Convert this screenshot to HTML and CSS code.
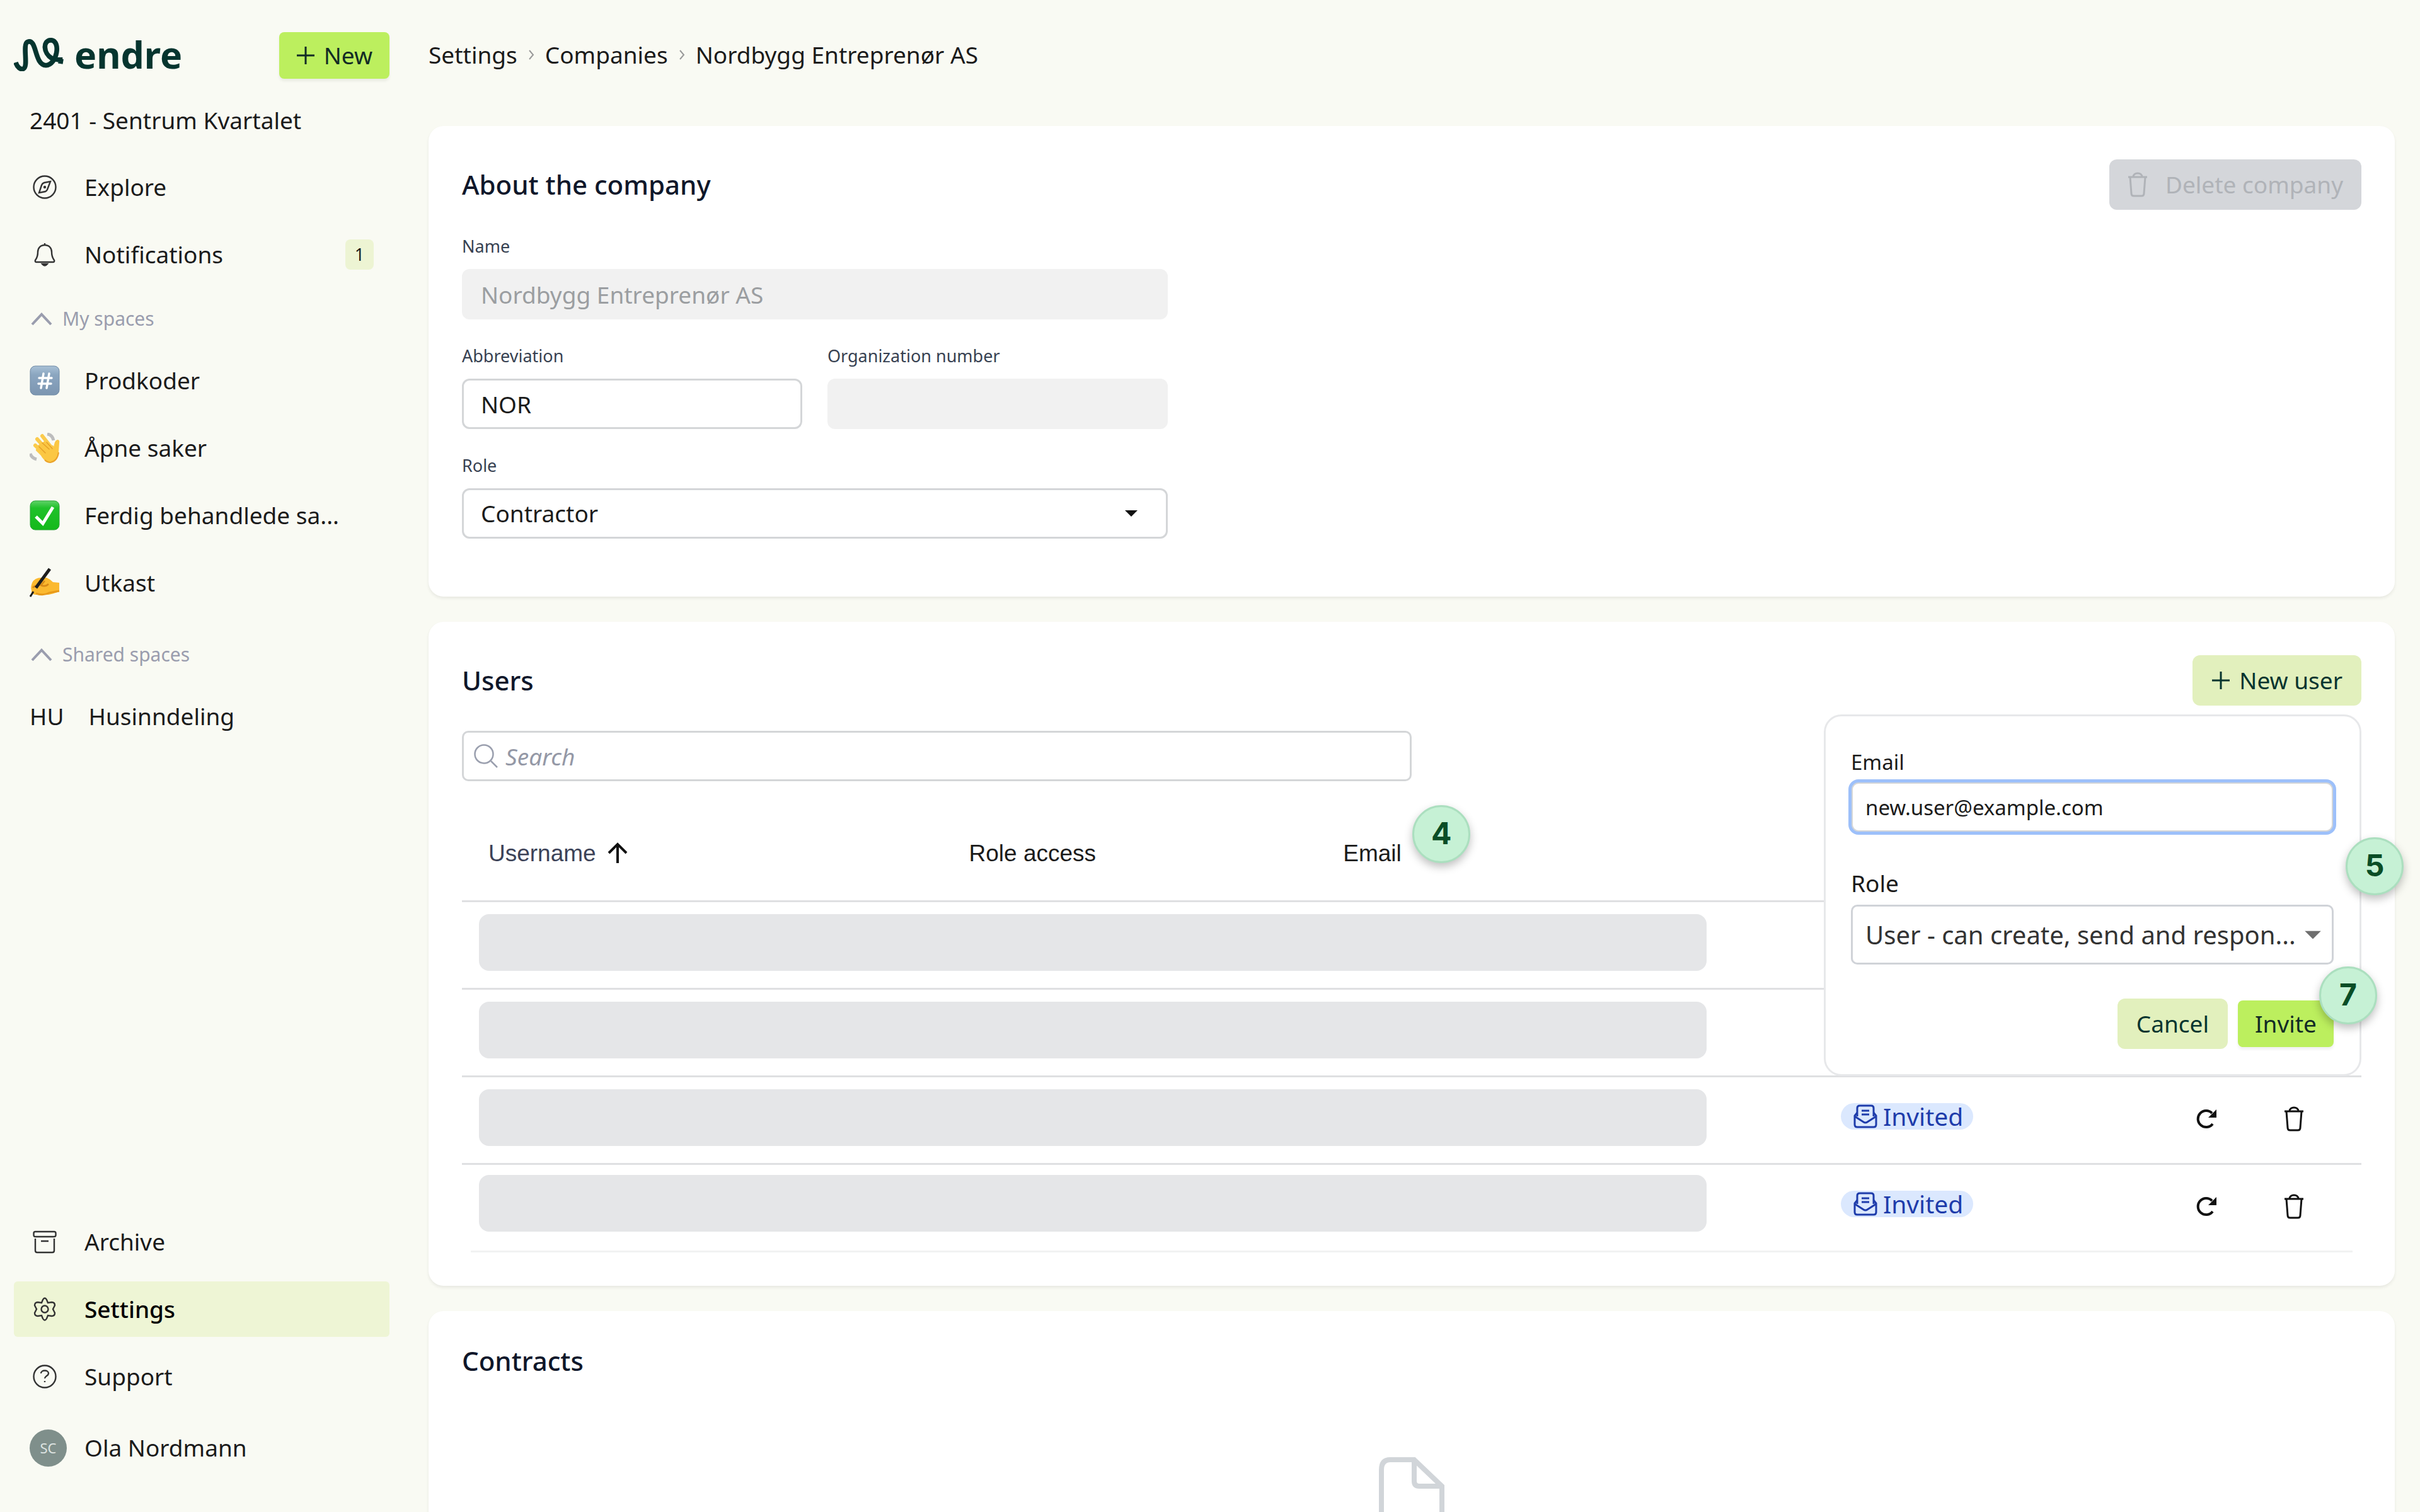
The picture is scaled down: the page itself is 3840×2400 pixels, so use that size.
FILE: index.html
```html
<!DOCTYPE html>
<html lang="en">
  <head>
    <meta charset="utf-8" />
    <meta name="viewport" content="width=device-width,initial-scale=1.0" />
    <title>Nordbygg Entreprenør AS - endre</title>
    <link rel="stylesheet" href="styles.css">
  </head>
  <body>
    <!-- shared icons -->
    <svg class="sprite" aria-hidden="true">
      <symbol id="icon-plus" viewBox="0 0 30 30">
        <path d="M15 1V29M1 15H29" />
      </symbol>
      <symbol id="icon-chevron-up" viewBox="0 0 34 22">
        <path d="M2 20L17 4L32 20" />
      </symbol>
      <symbol id="icon-trash" viewBox="0 0 32 40">
        <path d="M1 8H31M9 8C9 0 23 0 23 8M4 8L6 34Q6 38 10 38H22Q26 38 26 34L28 8" />
      </symbol>
      <symbol id="icon-refresh" viewBox="0 0 34 34">
        <path d="M27 25A13 13 0 1 1 26 8" />
        <path class="solid" d="M33 2V15H20Z" />
      </symbol>
      <symbol id="icon-invited" viewBox="0 0 38 38">
        <path d="M6 13L2 18V32Q2 36 6 36H32Q36 36 36 32V18L32 13" />
        <path d="M6 19V6Q6 2 10 2H28Q32 2 32 6V19" />
        <path d="M2 19L16 28Q19 30 22 28L36 19M13 10H25M13 16H25" />
      </symbol>
    </svg>

    <div class="app">
      <aside class="sidebar">
        <div class="sidebar-top">
          <a class="logo" href="#">
            <svg class="logo-mark" viewBox="35 33 240 160" aria-hidden="true">
              <path d="M43 151C51 176 66 186 79 182C106 172 74 66 99 53C146 32 130 163 188 165C240 163 262 48 212 44C170 46 177 108 214 130C231 138 247 139 268 138M261 134L257 157" />
            </svg>
            <span>endre</span>
          </a>
          <button class="btn btn-primary" type="button">
            <svg class="plus"><use href="#icon-plus" /></svg>
            New
          </button>
        </div>

        <div class="project">2401 - Sentrum Kvartalet</div>

        <nav class="nav">
          <a class="nav-item" href="#">
            <span class="nav-icon">
              <svg class="line-icon" viewBox="0 0 38 38">
                <circle cx="19" cy="19" r="17.5" />
                <path d="M28 10L23 23Q22 25 20 26L10 28L14 16Q15 13 18 12Z" />
                <circle cx="19" cy="19" r="1" />
              </svg>
            </span>
            Explore
          </a>
          <a class="nav-item" href="#">
            <span class="nav-icon">
              <svg class="line-icon" viewBox="0 0 38 38">
                <path d="M19 1V4M19 4C12 4 8 9 8 15C8 23 6 25 4 28Q3 31 6 31H32Q35 31 34 28C32 25 30 23 30 15C30 9 26 4 19 4Z" />
                <path d="M15 34Q19 39 23 34Z" />
              </svg>
            </span>
            Notifications
            <span class="count">1</span>
          </a>

          <button class="nav-heading" type="button">
            <svg class="chevron"><use href="#icon-chevron-up" /></svg>
            My spaces
          </button>
          <a class="nav-item" href="#">
            <span class="nav-icon">
              <svg class="emoji" viewBox="0 0 48 48">
                <defs>
                  <linearGradient id="hash-bg" x1="0" y1="0" x2="0" y2="1">
                    <stop offset="0" stop-color="#a9c1d6" />
                    <stop offset="0.3" stop-color="#8ba6c0" />
                    <stop offset="1" stop-color="#7c95b0" />
                  </linearGradient>
                </defs>
                <rect x="1" y="1" width="46" height="46" rx="8" fill="url(#hash-bg)" stroke="#6f8aa5" />
                <path d="M22 13L18 36M31 13L27 36M15 20H35M14 29H34" fill="none" stroke="#fff" stroke-width="3.5" stroke-linecap="round" />
              </svg>
            </span>
            Prodkoder
          </a>
          <a class="nav-item" href="#">
            <span class="nav-icon">
              <svg class="emoji" viewBox="0 0 48 48">
                <path d="M28 2Q36 3 38 12M1 33Q3 40 11 42" fill="none" stroke="#bdbdbd" stroke-width="5" />
                <path d="M13 27L25 39M9 20L24 34M12 10L29 29M20 5L35 24M26 38L36 23" fill="none" stroke="#fbcb4c" stroke-width="6" stroke-linecap="round" />
                <path d="M13 20L24 13L38 25Q39 12 44 11Q48 11 47 16L46 31Q44 45 33 47Q26 48 19 38Z" fill="#fbc743" />
                <path d="M15 22L25 32M20 16L31 26M27 15L36 25" fill="none" stroke="#e5a129" stroke-width="1.5" stroke-linecap="round" />
                <path d="M46 31Q44 45 33 47Q28 47 24 43" fill="none" stroke="#eba32a" stroke-width="2" />
              </svg>
            </span>
            Åpne saker
          </a>
          <a class="nav-item" href="#">
            <span class="nav-icon">
              <svg class="emoji" viewBox="0 0 48 48">
                <defs>
                  <linearGradient id="check-bg" x1="0" y1="0" x2="0" y2="1">
                    <stop offset="0" stop-color="#5fd268" />
                    <stop offset="0.25" stop-color="#1fc12a" />
                    <stop offset="1" stop-color="#14b91b" />
                  </linearGradient>
                </defs>
                <rect x="1" y="1" width="46" height="46" rx="8" fill="url(#check-bg)" stroke="#2aa437" />
                <path d="M10 26L21 37L37 11" fill="none" stroke="#fff" stroke-width="5" />
              </svg>
            </span>
            Ferdig behandlede sa...
          </a>
          <a class="nav-item" href="#">
            <span class="nav-icon">
              <svg class="emoji" viewBox="0 0 48 48">
                <path d="M4 24Q8 16 18 16H27Q32 18 37 23L47 24V38Q36 42 30 43H10Q2 43 3 36Q1 32 4 24Z" fill="#fbb92f" />
                <path d="M5 32Q9 27 14 30M24 21L18 28Q25 31 30 26" fill="none" stroke="#d98a17" stroke-width="2.5" />
                <path d="M10 41Q22 45 31 40L47 37" fill="none" stroke="#e89a1b" stroke-width="3" />
                <path d="M32 2L10 32" stroke="#1d1d1d" stroke-width="5" />
                <path d="M6 38L1 46" stroke="#1d1d1d" stroke-width="3" />
              </svg>
            </span>
            Utkast
          </a>

          <button class="nav-heading nav-heading-shared" type="button">
            <svg class="chevron"><use href="#icon-chevron-up" /></svg>
            Shared spaces
          </button>
          <a class="nav-item" href="#">
            <span class="nav-icon">HU</span>
            Husinndeling
          </a>
        </nav>

        <nav class="nav nav-bottom">
          <a class="nav-item" href="#">
            <span class="nav-icon">
              <svg class="line-icon" viewBox="0 0 38 38">
                <rect x="1.5" y="3" width="35" height="8" rx="2.5" />
                <path d="M4 14V33Q4 36 7 36H31Q34 36 34 33V14M13 18H25" />
              </svg>
            </span>
            Archive
          </a>
          <a class="nav-item active" href="#">
            <span class="nav-icon">
              <svg class="line-icon" viewBox="0 0 38 38">
                <path d="M16 4Q19 -1 22 4L24 9L30 8Q35 8 35 13L32 19L35 25Q35 30 30 30L24 29L22 34Q19 39 16 34L14 29L8 30Q3 30 3 25L6 19L3 13Q3 8 8 8L14 9Z" />
                <circle cx="19" cy="19" r="5.5" />
              </svg>
            </span>
            Settings
          </a>
          <a class="nav-item" href="#">
            <span class="nav-icon">
              <svg class="line-icon" viewBox="0 0 38 38">
                <circle cx="19" cy="19" r="17.5" />
                <path d="M13 14C13 8 25 8 25 14C25 18 19 18 19 22M19 26V28" />
              </svg>
            </span>
            Support
          </a>
          <a class="nav-item user" href="#">
            <span class="avatar">SC</span>
            Ola Nordmann
          </a>
        </nav>
      </aside>

      <main class="main">
        <nav class="breadcrumb" aria-label="Breadcrumb">
          <a href="#">Settings</a>
          <svg viewBox="0 0 10 18"><path d="M2 2L8 9L2 16" /></svg>
          <a href="#">Companies</a>
          <svg viewBox="0 0 10 18"><path d="M2 2L8 9L2 16" /></svg>
          <span>Nordbygg Entreprenør AS</span>
        </nav>

        <section class="card card-company">
          <div class="card-header">
            <h2>About the company</h2>
            <button class="btn btn-delete" type="button" disabled>
              <svg class="trash"><use href="#icon-trash" /></svg>
              Delete company
            </button>
          </div>
          <form class="company-form">
            <div class="field wide">
              <label for="name">Name</label>
              <input id="name" type="text" value="Nordbygg Entreprenør AS" disabled>
            </div>
            <div class="field">
              <label for="abbreviation">Abbreviation</label>
              <input id="abbreviation" type="text" value="NOR">
            </div>
            <div class="field">
              <label for="orgnr">Organization number</label>
              <input id="orgnr" type="text" disabled>
            </div>
            <div class="field wide">
              <label for="role">Role</label>
              <div class="select">
                <select id="role">
                  <option>Contractor</option>
                </select>
                <svg class="caret" viewBox="0 0 20 10"><path d="M0 0H20L10 10Z" /></svg>
              </div>
            </div>
          </form>
        </section>

        <section class="card">
          <div class="card-header">
            <h2>Users</h2>
            <div class="new-user">
              <button class="btn btn-secondary" type="button">
                <svg class="plus"><use href="#icon-plus" /></svg>
                New user
              </button>
              <form class="popover">
                <label class="email-label" for="invite-email">Email</label>
                <input id="invite-email" type="email" value="new.user@example.com">
                <label class="role-label" for="invite-role">Role</label>
                <div class="select">
                  <select id="invite-role">
                    <option>User - can create, send and respon...</option>
                  </select>
                  <svg class="caret" viewBox="0 0 26 13"><path d="M0 0H26L13 13Z" /></svg>
                </div>
                <div class="popover-actions">
                  <button class="btn btn-secondary" type="button">Cancel</button>
                  <button class="btn btn-primary" type="button">Invite</button>
                </div>
                <span class="step step-5">5</span>
                <span class="step step-7">7</span>
              </form>
            </div>
          </div>

          <div class="search">
            <svg viewBox="0 0 38 38" aria-hidden="true"><circle cx="16" cy="16" r="14.5" /><path d="M27 27L37 37" /></svg>
            <input type="search" placeholder="Search" aria-label="Search">
          </div>

          <table class="users">
            <colgroup>
              <col class="col-username">
              <col class="col-role">
              <col class="col-email">
              <col class="col-status">
              <col class="col-actions">
            </colgroup>
            <thead>
              <tr>
                <th class="sorted">
                  Username
                  <svg viewBox="0 0 34 34"><path d="M17 33V3M3 17L17 3L31 17" /></svg>
                </th>
                <th>Role access</th>
                <th>Email<span class="step step-4">4</span></th>
                <th></th>
                <th></th>
              </tr>
            </thead>
            <tbody>
              <tr>
                <td class="masked" colspan="3"><div class="mask"></div></td>
                <td></td>
                <td></td>
              </tr>
              <tr>
                <td class="masked" colspan="3"><div class="mask"></div></td>
                <td></td>
                <td></td>
              </tr>
              <tr>
                <td class="masked" colspan="3"><div class="mask"></div></td>
                <td class="status">
                  <span class="pill"><svg><use href="#icon-invited" /></svg>Invited</span>
                </td>
                <td>
                  <div class="actions">
                    <button type="button" aria-label="Resend"><svg class="refresh"><use href="#icon-refresh" /></svg></button>
                    <button type="button" aria-label="Delete"><svg class="trash"><use href="#icon-trash" /></svg></button>
                  </div>
                </td>
              </tr>
              <tr>
                <td class="masked" colspan="3"><div class="mask"></div></td>
                <td class="status">
                  <span class="pill"><svg><use href="#icon-invited" /></svg>Invited</span>
                </td>
                <td>
                  <div class="actions">
                    <button type="button" aria-label="Resend"><svg class="refresh"><use href="#icon-refresh" /></svg></button>
                    <button type="button" aria-label="Delete"><svg class="trash"><use href="#icon-trash" /></svg></button>
                  </div>
                </td>
              </tr>
            </tbody>
          </table>
          <div class="table-end"></div>
        </section>

        <section class="card">
          <h2>Contracts</h2>
          <div class="empty">
            <svg viewBox="0 0 104 130">
              <path d="M56 4H18Q4 4 4 20V110Q4 126 18 126H86Q100 126 100 110V46L56 4V38Q56 46 64 46H100" />
            </svg>
          </div>
        </section>
      </main>
    </div>
  </body>
</html>
```
FILE: styles.css
```css
* {
  box-sizing: border-box;
}
body {
  margin: 0;
  background: #f9faf3;
  color: #1b1b1b;
  font-family: "Noto Sans", sans-serif;
  font-size: 37px;
  line-height: 50px;
}
button,
input,
select {
  font: inherit;
  color: inherit;
}
button {
  cursor: pointer;
}
a {
  color: inherit;
  text-decoration: none;
}
h2 {
  margin: 0;
  color: #0f172a;
  font-size: 42px;
  font-weight: 500;
  line-height: 52px;
}
svg {
  flex-shrink: 0;
  fill: none;
  stroke: currentColor;
}
.sprite {
  display: none;
}
.app {
  display: flex;
  height: 100vh;
}

/* sidebar */
.sidebar {
  display: flex;
  flex-direction: column;
  flex-shrink: 0;
  width: 640px;
  padding: 51px 22px 58px;
}
.sidebar-top {
  display: flex;
  justify-content: space-between;
  align-items: center;
}
.logo {
  display: flex;
  align-items: center;
  gap: 16px;
  color: #06352f;
  font-size: 59px;
  font-weight: 700;
  line-height: 70px;
  padding-bottom: 4px;
}
.logo-mark {
  width: 80px;
  height: 53px;
  stroke-width: 23;
}
.project {
  margin: 41px 0 37px;
  padding: 0 25px;
}
.nav {
  display: flex;
  flex-direction: column;
  gap: 19px;
}
.nav-bottom {
  margin-top: auto;
}
.nav-item {
  display: flex;
  align-items: center;
  gap: 39px;
  height: 88px;
  padding: 0 25px;
  border-radius: 6px;
  white-space: nowrap;
}
.nav-item.active {
  background: #eef5d5;
  font-weight: 500;
  color: #000;
}
.nav-icon {
  display: flex;
  justify-content: center;
  flex-shrink: 0;
  min-width: 48px;
}
.line-icon {
  width: 38px;
  height: 38px;
  color: #333;
  stroke-width: 2.4;
  overflow: visible;
}
.emoji {
  width: 48px;
  height: 48px;
  stroke: none;
}
.count {
  margin-left: auto;
  width: 45px;
  border-radius: 8px;
  background: #edf4d3;
  font-size: 27px;
  line-height: 48px;
  text-align: center;
}
.nav-heading {
  display: flex;
  align-items: center;
  gap: 16px;
  height: 74px;
  padding: 4px 27px 0;
  border: 0;
  background: none;
  color: #9a9dae;
  font-size: 30px;
}
.nav-heading-shared {
  margin-top: 12px;
}
.chevron {
  width: 34px;
  height: 22px;
  stroke-width: 4;
}
.user {
  gap: 28px;
  margin-top: 6px;
}
.avatar {
  width: 59px;
  border-radius: 50%;
  background: #7f8f8b;
  color: #dde3e1;
  font-size: 22px;
  line-height: 59px;
  text-align: center;
}

/* buttons */
.btn {
  display: flex;
  align-items: center;
  justify-content: center;
  height: 80px;
  border: 0;
  border-radius: 12px;
  white-space: nowrap;
}
.btn-primary {
  height: 74px;
  padding: 0 27px;
  border-radius: 8px;
  background: #bcef5e;
  color: #122b25;
  box-shadow: 0 4px 4px rgba(0, 0, 0, 0.06);
}
.btn-secondary {
  padding: 0 30px;
  background: #e2f0bd;
  color: #06352f;
}
.btn-delete {
  gap: 28px;
  padding: 0 29px;
  background: #d4d6da;
  color: #b0b3b8;
}
.plus {
  width: 30px;
  height: 30px;
  margin-right: 14px;
  stroke-width: 3;
}
.trash {
  width: 32px;
  height: 40px;
  stroke-width: 3;
}

/* main */
.main {
  flex: 1;
  min-width: 0;
  padding: 62px 40px 40px;
  overflow-y: auto;
  scrollbar-width: none;
}
.breadcrumb {
  display: flex;
  align-items: center;
  gap: 17px;
  margin-bottom: 88px;
}
.breadcrumb svg {
  width: 10px;
  height: 18px;
  color: #999;
  stroke-width: 2;
}
.card {
  margin-bottom: 40px;
  padding: 53px;
  border-radius: 24px;
  background: #fff;
  box-shadow: 0 3px 5px rgba(0, 0, 0, 0.07);
}
.card-company {
  padding-bottom: 92px;
}
.card-header {
  display: flex;
  align-items: center;
  justify-content: space-between;
  margin-bottom: 40px;
}

/* form fields */
.company-form {
  display: grid;
  grid-template-columns: 1fr 1fr;
  gap: 40px;
  max-width: 1120px;
}
.field {
  display: flex;
  flex-direction: column;
  gap: 18px;
  min-width: 0;
}
.field.wide {
  grid-column: span 2;
}
.field label {
  color: #374151;
  font-size: 27px;
  line-height: 36px;
}
input,
select {
  display: block;
  width: 100%;
  height: 80px;
  padding: 0 27px;
  border: 3px solid #d4d6d8;
  border-radius: 12px;
  background: #fff;
  outline: none;
  appearance: none;
}
input:disabled {
  border-color: #f1f1f1;
  background: #f1f1f1;
  color: #9b9ea1;
}
.select {
  position: relative;
}
.caret {
  position: absolute;
  top: 50%;
  right: 48px;
  width: 20px;
  height: 10px;
  transform: translateY(-50%);
  fill: #111;
  stroke: none;
  pointer-events: none;
}

/* invite popover */
.new-user {
  position: relative;
}
.popover {
  position: absolute;
  z-index: 2;
  top: calc(100% + 14px);
  right: 0;
  width: 853px;
  padding: 51px 41px 40px 40px;
  border: 3px solid #e7e8ea;
  border-radius: 28px;
  background: #fff;
}
.popover label {
  display: block;
  line-height: 44px;
}
.popover input {
  padding: 0 20px;
  outline: 5px solid #9dc0fa;
  outline-offset: -1px;
  font-size: 33px;
}
.email-label {
  margin-bottom: 9px;
  font-size: 33px;
}
.role-label {
  margin: 59px 0 12px;
}
.popover select {
  height: 95px;
  padding: 0 20px;
  border-color: #d0d3d8;
  border-radius: 10px;
  color: #333;
  font-size: 40px;
}
.popover .caret {
  right: 20px;
  width: 26px;
  height: 13px;
  fill: #6f6f6f;
}
.popover-actions {
  display: flex;
  align-items: center;
  justify-content: flex-end;
  gap: 16px;
  margin-top: 54px;
}

/* numbered step markers */
.step {
  position: absolute;
  width: 92px;
  height: 92px;
  border: 3px solid #abdfbf;
  border-radius: 50%;
  background: #c6f1d5;
  box-shadow: 0 6px 14px rgba(0, 0, 0, 0.25);
  color: #0a4d26;
  font-family: Inter, sans-serif;
  font-size: 48px;
  font-weight: 700;
  line-height: 84px;
  text-align: center;
}
.step-4 {
  top: -2px;
  left: 152px;
}
.step-5 {
  top: 192px;
  right: -70px;
}
.step-7 {
  top: 397px;
  right: -28px;
}

/* users table */
.search {
  display: flex;
  align-items: center;
  gap: 12px;
  width: 50%;
  height: 80px;
  margin-bottom: 40px;
  padding: 0 16px;
  border: 3px solid #d4d6d8;
  border-radius: 10px;
  color: #9a9fae;
}
.search svg {
  width: 38px;
  height: 38px;
  stroke-width: 2.5;
}
.search input {
  height: 70px;
  padding: 0;
  border: 0;
}
.search input::placeholder {
  color: #9498a6;
  font-style: italic;
  opacity: 1;
}
.users {
  width: 100%;
  border-collapse: separate;
  border-spacing: 0;
  table-layout: fixed;
}
.col-username {
  width: 25.3%;
}
.col-role {
  width: 19.7%;
}
.col-email {
  width: 26.2%;
}
.users th {
  position: relative;
  height: 152px;
  padding: 0 0 0 42px;
  border-bottom: 3px solid #dfe0e2;
  font-family: "Liberation Sans", sans-serif;
  font-weight: 400;
  text-align: left;
}
.users .sorted {
  color: #3c4257;
}
.sorted svg {
  width: 34px;
  height: 34px;
  margin-left: 7px;
  color: #111;
  stroke-width: 4;
  vertical-align: -4px;
}
.users td {
  height: 139px;
  padding: 0;
  border-bottom: 3px solid #dfe0e2;
}
.users tr:last-child td {
  height: 136px;
  border-bottom: 0;
}
.users .masked {
  padding: 0 171px 8px 27px;
}
.users tr:last-child .masked {
  padding-bottom: 14px;
}
.mask {
  height: 90px;
  border-radius: 16px;
  background: #e5e6e8;
}
.users .status {
  padding: 0 0 20px 42px;
}
.pill {
  display: inline-flex;
  align-items: center;
  gap: 9px;
  height: 42px;
  padding: 0 16px 0 20px;
  border-radius: 21px;
  background: #dbe8fe;
  color: #1e3cab;
  font-size: 39px;
  vertical-align: middle;
}
.pill svg {
  width: 38px;
  height: 38px;
  stroke-width: 3;
}
.actions {
  display: flex;
  justify-content: flex-end;
  gap: 87px;
  padding: 0 81px 4px 0;
}
.actions button {
  display: flex;
  justify-content: center;
  align-items: center;
  width: 52px;
  height: 52px;
  padding: 0;
  border: 0;
  background: none;
  color: #111;
}
.refresh {
  width: 34px;
  height: 34px;
  stroke-width: 4;
}
.solid {
  fill: currentColor;
  stroke: none;
}
.table-end {
  margin: 0 14px;
  border-bottom: 3px solid #f1f2f2;
}

.empty {
  display: flex;
  justify-content: center;
  padding: 127px 0;
}
.empty svg {
  width: 104px;
  height: 130px;
  color: #d1d5d9;
  stroke-width: 8;
}
```
